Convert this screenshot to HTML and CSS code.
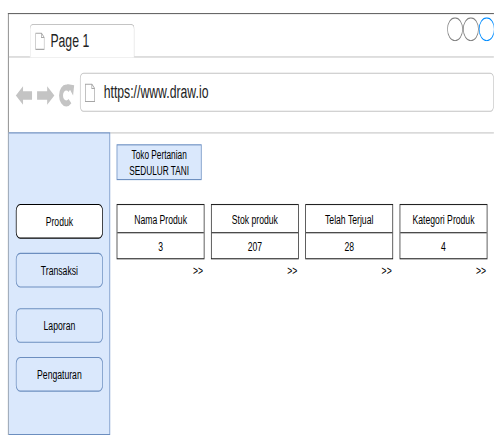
FILE: index.html
```html
<!DOCTYPE html>
<html lang="id">
<head>
<meta charset="utf-8">
<title>Sedulur Tani</title>
<link rel="stylesheet" href="styles.css">
</head>
<body>
<div class="stage">
  <div class="window">
    <div class="tabbar">
      <div class="tab">
        <svg class="doc doc-tab" viewBox="0 0 13 16" aria-hidden="true">
          <path d="M0.5 0.5H8.5L12.5 4.5V15.5H0.5Z" fill="#fff" stroke="#a6a6a6"/>
          <path d="M8.5 0.5V4.5H12.5" fill="none" stroke="#a6a6a6"/>
        </svg>
        <span class="tab-title">Page 1</span>
      </div>
      <!-- window buttons; the last one runs under the window edge -->
      <svg class="win-buttons" width="65" height="22" viewBox="0 0 65 22" aria-hidden="true">
        <circle cx="11" cy="11" r="10.5" fill="none" stroke="#808080"/>
        <circle cx="33" cy="11" r="10.5" fill="none" stroke="#808080"/>
        <circle cx="55" cy="11" r="10.5" fill="none" stroke="#008cff"/>
      </svg>
    </div>

    <div class="addressrow">
      <svg class="nav" width="99" height="69" viewBox="1 41 99 69" aria-hidden="true">
        <!-- back -->
        <path d="M11 76L21 67.5V72H33.5V80H21V84.5Z" fill="#c4c4c4"/>
        <!-- forward -->
        <path d="M64.5 76L54.5 67.5V72H40.5V80H54.5V84.5Z" fill="#c4c4c4"/>
        <!-- reload -->
        <path d="M86.2 70.8A7.3 7.3 0 1 0 86.2 81.2" fill="none" stroke="#c4c4c4" stroke-width="5.5"/>
        <path d="M82 65.5L92 66.5L90.5 76Z" fill="#c4c4c4"/>
      </svg>
      <div class="address">
        <svg class="doc doc-url" viewBox="0 0 14 17" aria-hidden="true">
          <path d="M0.5 0.5H9.5L13.5 4.5V16.5H0.5Z" fill="#fff" stroke="#a6a6a6"/>
          <path d="M9.5 0.5V4.5H13.5" fill="none" stroke="#a6a6a6"/>
        </svg>
        <span class="url">https://www.draw.io</span>
      </div>
    </div>

    <div class="content">
      <aside class="sidebar">
        <div class="menu menu-active">Produk</div>
        <div class="menu">Transaksi</div>
        <div class="menu menu-report">Laporan</div>
        <div class="menu">Pengaturan</div>
      </aside>

      <main class="main">
        <div class="brand">Toko Pertanian<br>SEDULUR TANI</div>

        <div class="cards">
          <div class="stat">
            <div class="card">
              <div class="card-head">Nama Produk</div>
              <div class="card-val">3</div>
            </div>
            <div class="more">&gt;&gt;</div>
          </div>
          <div class="stat">
            <div class="card">
              <div class="card-head">Stok produk</div>
              <div class="card-val">207</div>
            </div>
            <div class="more">&gt;&gt;</div>
          </div>
          <div class="stat">
            <div class="card">
              <div class="card-head">Telah Terjual</div>
              <div class="card-val">28</div>
            </div>
            <div class="more">&gt;&gt;</div>
          </div>
          <div class="stat">
            <div class="card">
              <div class="card-head">Kategori Produk</div>
              <div class="card-val">4</div>
            </div>
            <div class="more">&gt;&gt;</div>
          </div>
        </div>
      </main>
    </div>
  </div>
</div>
</body>
</html>
```

FILE: styles.css
```css
html,
body {
  margin: 0;
  padding: 0;
  background: #fff;
}

body {
  width: 494px;
  height: 435px;
  overflow: hidden;
  font-family: "Liberation Sans", Arial, Helvetica, sans-serif;
  color: #000;
}

/* the mockup is drawn in its own units and squeezed to the viewport */
.stage {
  width: 686px;
  padding: 12px 0 0 11px;
  box-sizing: border-box;
  transform: scale(0.72, 1.085);
  transform-origin: 0 0;
}

/* the window continues past the right edge, so it is cut there */
.window {
  width: 675px;
  height: 392px;
  border: 1px solid #666;
  border-right: none;
  box-sizing: border-box;
  background: #fff;
  display: flex;
  flex-direction: column;
  overflow: hidden;
}

/* ---- tab strip ---- */
.tabbar {
  height: 39px;
  border-bottom: 1px solid #c4c4c4;
  display: flex;
  align-items: flex-end;
  flex-shrink: 0;
}

.tab {
  position: relative;
  z-index: 1;
  margin-left: 29px;
  margin-bottom: -1px;
  width: 146px;
  height: 31px;
  box-sizing: border-box;
  border: 1px solid #c4c4c4;
  border-bottom: none;
  border-radius: 5px 5px 0 0;
  background: #fff;
  display: flex;
  align-items: center;
  padding-left: 7px;
  flex-shrink: 0;
}

.doc {
  display: block;
  flex-shrink: 0;
}

.doc-tab {
  width: 13px;
  height: 16px;
}

.tab-title {
  margin-left: 8px;
  font-size: 17px;
  line-height: 20px;
  color: #222;
}

.win-buttons {
  display: block;
  align-self: flex-start;
  margin: 3px 0 0 auto;
  flex-shrink: 0;
}

/* ---- address row ---- */
.addressrow {
  height: 69px;
  border-bottom: 1px solid #c4c4c4;
  display: flex;
  align-items: flex-start;
  flex-shrink: 0;
}

.nav {
  display: block;
  flex-shrink: 0;
}

.address {
  flex: 1;
  margin: 14px 0 0 0;
  height: 36px;
  box-sizing: border-box;
  border: 1px solid #c4c4c4;
  border-radius: 5px;
  display: flex;
  align-items: center;
  padding-left: 6px;
}

.doc-url {
  width: 14px;
  height: 17px;
}

.url {
  margin-left: 12px;
  font-size: 17px;
  line-height: 20px;
  color: #222;
}

/* ---- page body ---- */
.content {
  flex: 1;
  margin-top: -1px;
  display: flex;
  align-items: flex-start;
}

.sidebar {
  margin-left: -1px;
  width: 142px;
  height: 279px;
  box-sizing: border-box;
  background: #dae8fc;
  border: 1px solid #6c8ebf;
  padding: 65px 0 0 10px;
  display: flex;
  flex-direction: column;
  gap: 13px;
  flex-shrink: 0;
}

.menu {
  width: 121px;
  height: 32px;
  box-sizing: border-box;
  border: 1px solid #6c8ebf;
  border-radius: 6px;
  background: #dae8fc;
  font-size: 12px;
  display: flex;
  align-items: center;
  justify-content: center;
}

.menu-active {
  background: #fff;
  border-color: #000;
}

.menu-report {
  margin-top: 6px;
}

.main {
  flex: 1;
  padding: 11px 0 0 9px;
}

.brand {
  width: 118px;
  height: 33px;
  box-sizing: border-box;
  background: #dae8fc;
  border: 1px solid #6c8ebf;
  font-size: 11.5px;
  line-height: 14px;
  text-align: center;
  display: flex;
  flex-direction: column;
  justify-content: center;
}

.cards {
  margin-top: 22px;
  display: flex;
  gap: 9px;
}

.stat {
  width: 122px;
}

.card {
  height: 51px;
  box-sizing: border-box;
  border: 1px solid #222;
  display: flex;
  flex-direction: column;
  font-size: 12px;
}

.card-head {
  height: 25px;
  border-bottom: 1px solid #222;
  display: flex;
  align-items: center;
  justify-content: center;
}

.card-val {
  flex: 1;
  display: flex;
  align-items: center;
  justify-content: center;
}

.more {
  margin-top: 3px;
  padding-right: 2px;
  font-size: 12px;
  line-height: 14px;
  text-align: right;
}
```
